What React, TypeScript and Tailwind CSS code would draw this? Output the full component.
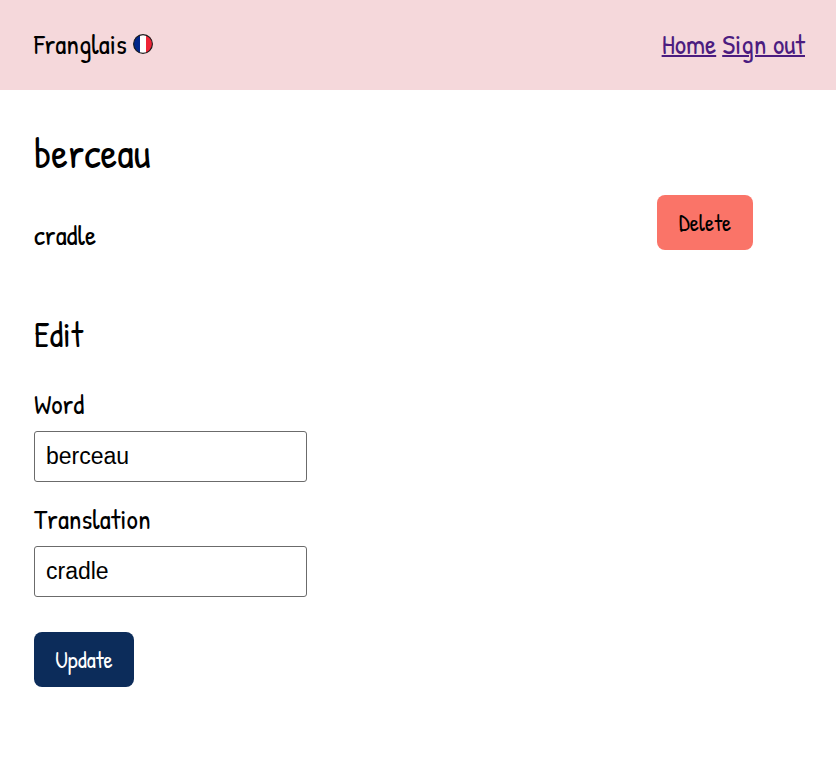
import { useState } from "react";

function FrenchFlag() {
  return (
    <svg viewBox="0 0 20 20" className="h-5 w-5" role="img" aria-label="French flag">
      <defs>
        <clipPath id="flag-disc">
          <circle cx="10" cy="10" r="9.5" />
        </clipPath>
      </defs>
      <g clipPath="url(#flag-disc)">
        <rect width="20" height="20" fill="#fff" />
        <rect width="7" height="20" fill="#002689" />
        <rect x="13" width="7" height="20" fill="#ee2436" />
      </g>
      <circle cx="10" cy="10" r="9.4" fill="none" stroke="#1c1c1c" strokeWidth="1.1" />
    </svg>
  );
}

type FieldProps = {
  id: string;
  label: string;
  value: string;
  onChange: (value: string) => void;
};

function Field({ id, label, value, onChange }: FieldProps) {
  return (
    <div className="flex flex-col items-start gap-2.5">
      <label htmlFor={id} className="text-[28px] leading-[34px]">
        {label}
      </label>
      <input
        id={id}
        type="text"
        value={value}
        onChange={(event) => onChange(event.target.value)}
        className="h-[51px] w-full max-w-[273px] rounded-[3px] border border-[#6b6b6b] bg-white px-[11px] font-['Liberation_Sans',Arial,sans-serif] text-[23px]"
      />
    </div>
  );
}

export default function App() {
  const [word, setWord] = useState("berceau");
  const [translation, setTranslation] = useState("cradle");

  return (
    <div className="min-h-screen bg-white font-['Patrick_Hand','Liberation_Sans_Narrow',Lato,sans-serif] text-black">
      <header className="flex items-center justify-between bg-[#f5d8db] pt-[27px] pr-[31px] pb-[29px] pl-[34px] text-[28px] leading-[34px]">
        <div className="flex items-center gap-1.5">
          <span>Franglais</span>
          <FrenchFlag />
        </div>
        <nav className="flex gap-1.5 text-[#4b1c80]">
          <a href="#home" className="underline decoration-2 underline-offset-1">
            Home
          </a>
          <a href="#sign-out" className="underline decoration-2 underline-offset-1">
            Sign out
          </a>
        </nav>
      </header>

      <main className="px-[34px] pt-[39px]">
        <h1 className="text-[42px] leading-12">berceau</h1>
        <div className="mt-[18px] flex items-start justify-between pr-[49px]">
          <p className="pt-[23px] text-[28px] leading-[34px]">cradle</p>
          <button type="button" className="h-[55px] w-24 rounded-lg bg-[#fa7468] pt-0.5 text-[23px]">
            Delete
          </button>
        </div>

        <h2 className="mt-[59px] text-[35px] leading-12">Edit</h2>
        <form className="mt-7" onSubmit={(event) => event.preventDefault()}>
          <div className="flex flex-col gap-5">
            <Field id="word" label="Word" value={word} onChange={setWord} />
            <Field id="translation" label="Translation" value={translation} onChange={setTranslation} />
          </div>
          <button type="submit" className="mt-[35px] h-[55px] w-[100px] rounded-lg bg-[#0c2c5a] pt-0.5 text-[23px] text-white">
            Update
          </button>
        </form>
      </main>
    </div>
  );
}
